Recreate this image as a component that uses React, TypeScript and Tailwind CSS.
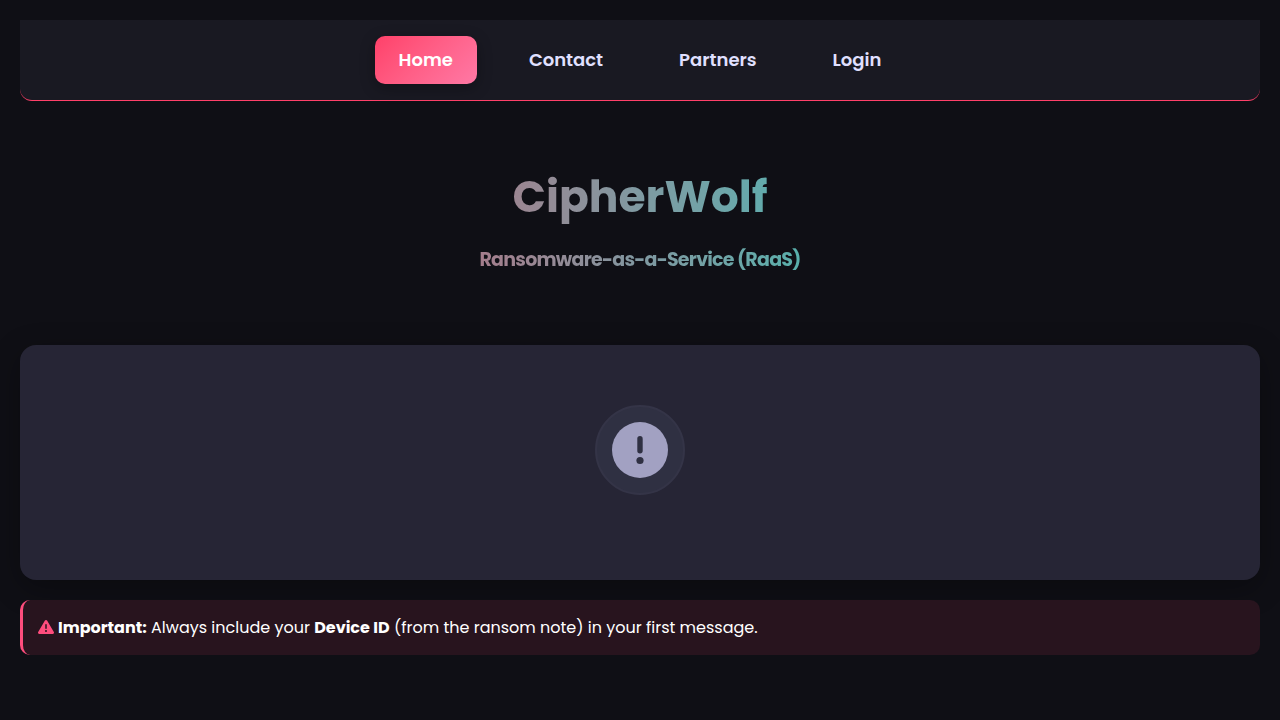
const navItems = [
  { label: 'Home', active: true },
  { label: 'Contact', active: false },
  { label: 'Partners', active: false },
  { label: 'Login', active: false },
]

function Navbar() {
  return (
    <nav className="flex justify-center gap-7 rounded-b-xl border-b border-[#ff4069] bg-[#191922] py-4">
      {navItems.map((item) => (
        <a
          key={item.label}
          href="#"
          className={`flex h-12 items-center justify-center rounded-[10px] px-6 text-lg font-semibold ${
            item.active
              ? 'bg-linear-135 from-[#ff4069] to-[#ff78a5] text-white shadow-[0_4px_15px_rgba(0,0,0,0.3)]'
              : 'text-[#e0e0ff]'
          }`}
        >
          {item.label}
        </a>
      ))}
    </nav>
  )
}

function Hero() {
  return (
    <header className="flex flex-col items-center pt-[60px] pb-[70px]">
      <h1 className="bg-linear-to-r from-[#9b8591] via-[#7f9aa2] to-[#62abac] bg-clip-text text-[44px] leading-[72px] font-bold text-transparent">
        CipherWolf
      </h1>
      <h2 className="mt-3 bg-linear-to-r from-[#a47d8c] via-[#8098a1] to-[#58b0ac] bg-clip-text text-[19px] leading-[30px] font-bold tracking-[-0.04em] text-transparent">
        Ransomware-as-a-Service (RaaS)
      </h2>
    </header>
  )
}

function StatusCard() {
  return (
    <section className="flex h-[235px] justify-center rounded-2xl bg-[#262535] pt-[60px] shadow-[0_8px_30px_rgba(0,0,0,0.3)]">
      <div className="flex h-[90px] w-[90px] items-center justify-center rounded-full border-2 border-[#343447] bg-[#2f3042]">
        <svg className="h-14 w-14" viewBox="0 0 56 56" aria-hidden="true">
          <circle cx="28" cy="28" r="28" fill="#a2a1c2" />
          <rect x="25.3" y="14" width="5.4" height="17.5" rx="2.7" fill="#2f3042" />
          <circle cx="28" cy="38.5" r="3.6" fill="#2f3042" />
        </svg>
      </div>
    </section>
  )
}

function Notice() {
  return (
    <p className="mt-5 rounded-[10px] border-l-3 border-[#ff4d7d] bg-[#28141e] px-[15px] py-[15px] text-base leading-[25px] text-white">
      <svg className="mr-1 inline-block h-4 w-4 align-[-2px]" viewBox="0 0 512 512" aria-hidden="true">
        <path
          fill="#ff4d7d"
          fillRule="evenodd"
          d="M256 32c14.200 0 27.300 7.500 34.500 19.800l216 368c7.300 12.400 7.300 27.700.2 40.100S486.300 480 472 480H40c-14.300 0-27.600-7.700-34.700-20.100s-7-27.800.2-40.100l216-368C228.700 39.500 241.800 32 256 32zm0 128c-13.300 0-24 10.700-24 24v112c0 13.300 10.700 24 24 24s24-10.700 24-24V184c0-13.300-10.700-24-24-24zm32 224a32 32 0 1 0-64 0 32 32 0 1 0 64 0z"
        />
      </svg>
      <strong>Important:</strong> Always include your <strong>Device ID</strong> (from the ransom note) in your first message.
    </p>
  )
}

export default function App() {
  return (
    <div className="min-h-screen bg-[#0f0f15] p-5 font-[Poppins,Inter,sans-serif]">
      <Navbar />
      <main>
        <Hero />
        <StatusCard />
        <Notice />
      </main>
    </div>
  )
}
